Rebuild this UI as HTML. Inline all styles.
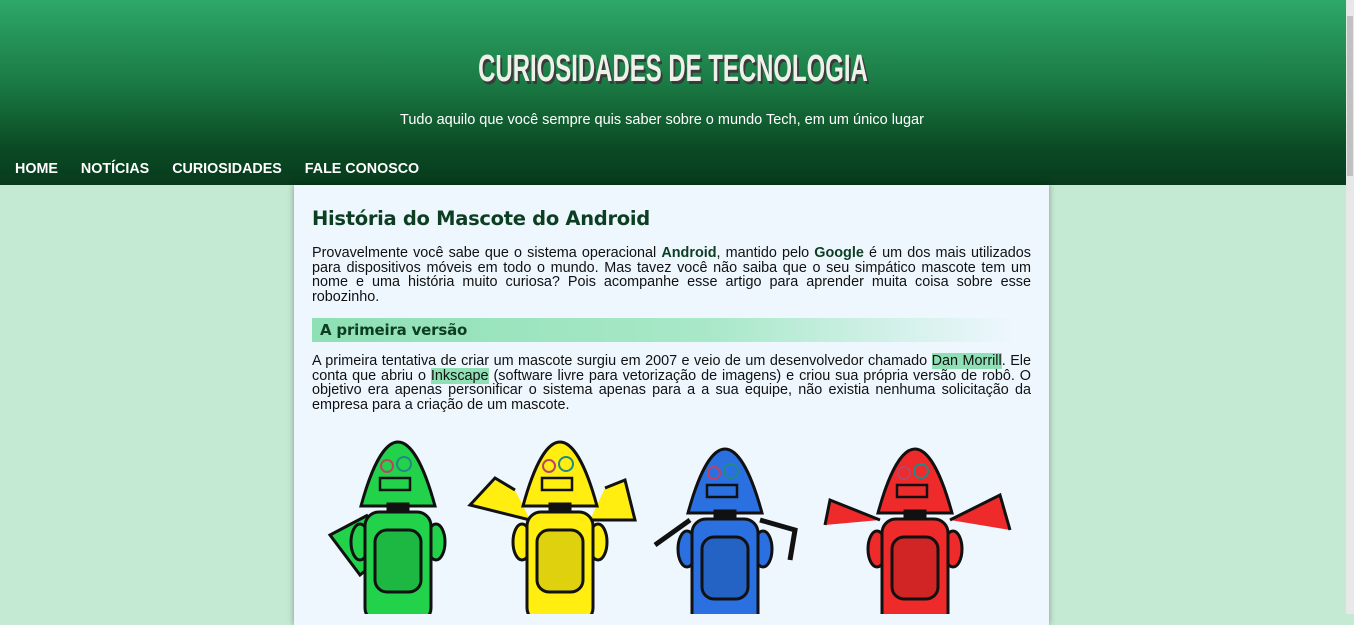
<!DOCTYPE html>
<html><head><meta charset="utf-8"><style>
*{margin:0;padding:0;box-sizing:border-box}
body{width:1354px;height:614px;overflow:hidden;background:#c4ead3;font-family:"Liberation Sans",Arial,sans-serif;position:relative}
header{position:absolute;left:0;top:0;width:1346px;height:185px;background:linear-gradient(#2ea868 0%,#1a7a44 45%,#0b4a24 80%,#073b1c 100%)}
h1{position:absolute;top:48px;left:0;width:1346px;text-align:center;font-family:"Liberation Sans",sans-serif;font-weight:bold;font-size:38px;color:#eef0ea;transform:scaleX(.63);text-shadow:3px 3px 0 #3a3a3a}
.sub{position:absolute;top:112px;width:1324px;text-align:center;color:#fff;font-size:14.5px}
nav{position:absolute;top:161px;left:15px;color:#fff;font-weight:bold;font-size:14.3px}
nav span{margin-right:19px}
.sb{position:absolute;right:0;top:0;width:8px;height:614px;background:#e8e8e8}
.sb i{position:absolute;left:1px;top:16px;width:6px;height:160px;background:#c1c1c1}
main{position:absolute;left:294px;top:185px;width:755px;height:440px;background:#eef7fe;box-shadow:0 0 6px rgba(0,0,0,.35);padding:0 18px}
h2{font-family:"Comic Sans MS","DejaVu Sans",sans-serif;color:#0c3e22;font-size:19.5px;margin-top:22px;letter-spacing:-.3px}
p{font-size:14.4px;line-height:14.5px;text-align:justify;color:#111;margin-top:16px}
p.p2{margin-top:12px}
p b{color:#0c3e22}
h3{margin-top:14px;height:24px;background:linear-gradient(90deg,#8fe0b5 0%,#a8e8c8 55%,#eef7fe 98%);font-family:"DejaVu Sans",sans-serif;color:#0c3e22;font-size:15px;padding:3px 8px;font-weight:bold;letter-spacing:-.2px}
.hl{background:#8fe0b5}
svg{position:absolute;left:0;top:0}
</style></head><body>
<header>
<h1>CURIOSIDADES DE TECNOLOGIA</h1>
<div class="sub">Tudo aquilo que você sempre quis saber sobre o mundo Tech, em um único lugar</div>
<nav><span>HOME</span> <span>NOTÍCIAS</span> <span>CURIOSIDADES</span> <span>FALE CONOSCO</span></nav>
</header>
<div class="sb"><i></i></div>
<main>
<h2>História do Mascote do Android</h2>
<p>Provavelmente você sabe que o sistema operacional <b>Android</b>, mantido pelo <b>Google</b> é um dos mais utilizados para dispositivos móveis em todo o mundo. Mas tavez você não saiba que o seu simpático mascote tem um nome e uma história muito curiosa? Pois acompanhe esse artigo para aprender muita coisa sobre esse robozinho.</p>
<h3>A primeira versão</h3>
<p class="p2">A primeira tentativa de criar um mascote surgiu em 2007 e veio de um desenvolvedor chamado <span class="hl">Dan Morrill</span>. Ele conta que abriu o <span class="hl">Inkscape</span> (software livre para vetorização de imagens) e criou sua própria versão de robô. O objetivo era apenas personificar o sistema apenas para a a sua equipe, não existia nenhuma solicitação da empresa para a criação de um mascote.</p>
</main>
<svg width="1354" height="614" viewBox="0 0 1354 614">
<defs>
<g id="r" stroke="#111" stroke-width="3">
<path d="M-37,64 C-25,20 -12,0 0,0 C12,0 25,20 37,64 Z"/>
<rect x="-10" y="62" width="20" height="10" fill="#111"/>
<ellipse cx="-38" cy="100" rx="9" ry="18"/>
<ellipse cx="38" cy="100" rx="9" ry="18"/>
<rect x="-33" y="70" width="66" height="110" rx="14"/>
<rect x="-23" y="88" width="46" height="62" rx="12" fill="#000" fill-opacity=".12"/>
<rect x="-18" y="36" width="30" height="12" fill="none" stroke-width="2.5"/>
<circle cx="-11" cy="24" r="6" fill="none" stroke="#b46" stroke-width="2"/>
<circle cx="6" cy="22" r="7" fill="none" stroke="#288" stroke-width="2"/>
</g>
</defs>
<g fill="#22d24a"><path d="M368,515 L330,535 L360,575 L372,565" stroke="#111" stroke-width="3"/><use href="#r" x="398" y="442"/></g>
<g fill="#ffee10"><path d="M530,520 L470,505 L495,478 L515,490 M590,520 L635,520 L625,480 L605,488" stroke="#111" stroke-width="3"/><use href="#r" x="560" y="442"/></g>
<g fill="#2a70e0"><path d="M690,520 L655,545 M760,520 L795,530 L790,560" stroke="#111" stroke-width="5" fill="none"/><use href="#r" x="725" y="449"/></g>
<g fill="#ee2a2a"><path d="M880,520 L830,500 L825,525 M950,520 L1000,495 L1010,530" stroke="#111" stroke-width="3"/><use href="#r" x="915" y="449"/></g>
</svg>
</body></html>
